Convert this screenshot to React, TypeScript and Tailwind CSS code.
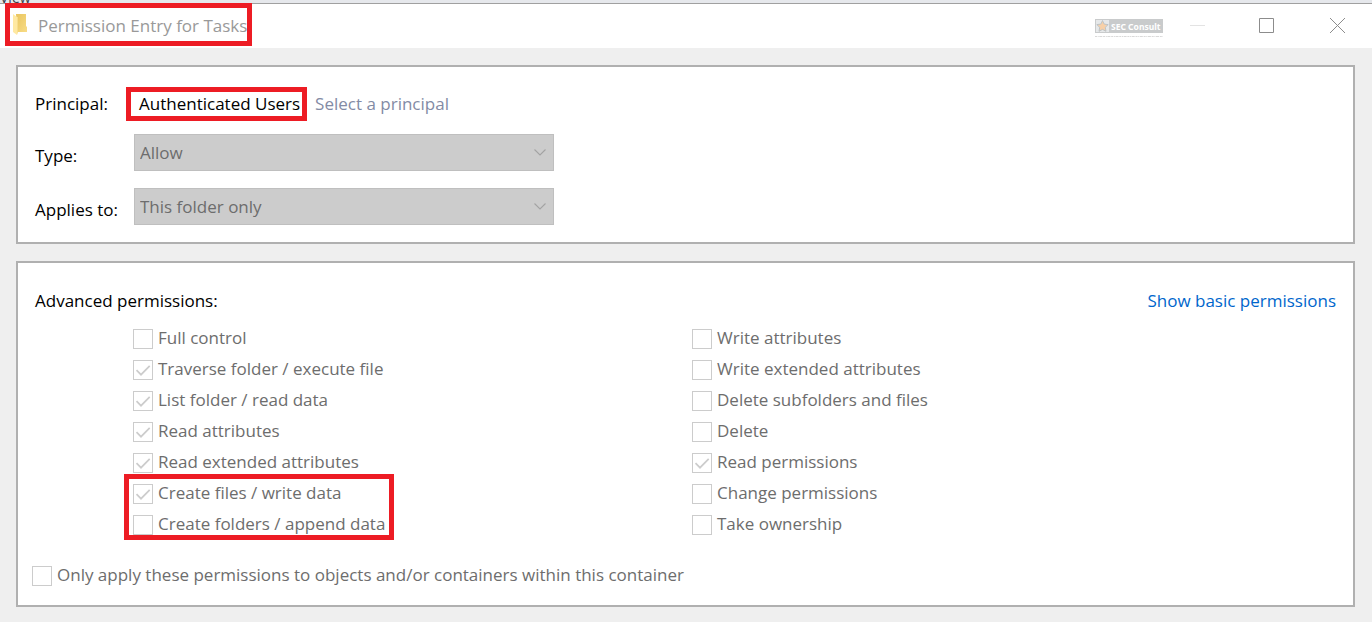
import React from "react";

type Permission = { label: string; checked?: boolean };

const leftTop: Permission[] = [
  { label: "Full control" },
  { label: "Traverse folder / execute file", checked: true },
  { label: "List folder / read data", checked: true },
  { label: "Read attributes", checked: true },
  { label: "Read extended attributes", checked: true },
];

const leftMarked: Permission[] = [
  { label: "Create files / write data", checked: true },
  { label: "Create folders / append data" },
];

const right: Permission[] = [
  { label: "Write attributes" },
  { label: "Write extended attributes" },
  { label: "Delete subfolders and files" },
  { label: "Delete" },
  { label: "Read permissions", checked: true },
  { label: "Change permissions" },
  { label: "Take ownership" },
];

function Check({ label, checked = false }: Permission) {
  return (
    <label className="flex h-[31px] items-center gap-[5px] whitespace-nowrap text-[#6d6d6d]">
      <span className="mt-[2px] grid size-5 shrink-0">
        <input
          type="checkbox"
          disabled
          defaultChecked={checked}
          className="col-start-1 row-start-1 size-5 appearance-none border border-[#cccccc] bg-white"
        />
        {checked && (
          <svg viewBox="0 0 20 20" className="col-start-1 row-start-1 size-5" aria-hidden="true">
            <path d="M3.5 10.2 8 14.7 16.7 5.8" fill="none" stroke="#cccccc" strokeWidth="1.7" />
          </svg>
        )}
      </span>
      {label}
    </label>
  );
}

function Select({ id, value }: { id: string; value: string }) {
  return (
    <div className="grid w-[420px]">
      <select
        id={id}
        disabled
        className="col-start-1 row-start-1 h-[37px] w-full appearance-none border border-[#bfbfbf] bg-[#cccccc] px-[5px] pt-px text-[#6d6d6d] opacity-100"
      >
        <option>{value}</option>
      </select>
      <svg
        viewBox="0 0 12 7"
        className="pointer-events-none col-start-1 row-start-1 mr-2 h-[7px] w-3 self-center justify-self-end"
        aria-hidden="true"
      >
        <path d="M.5.5 6 6 11.5.5" fill="none" stroke="#a3a3a3" strokeWidth="1.1" />
      </svg>
    </div>
  );
}

function FolderIcon() {
  return (
    <svg viewBox="0 0 14 21" className="h-[21px] w-[14px] shrink-0" aria-hidden="true">
      <defs>
        <linearGradient id="folder" x1="0" x2="1" y1="0" y2="1">
          <stop offset="0" stopColor="#e9c55f" />
          <stop offset="1" stopColor="#f8dc86" />
        </linearGradient>
      </defs>
      <path d="M3 0h10v12l1 1v5H4z" fill="url(#folder)" />
      <path d="M0 0 4 3v18l-4-3z" fill="#ffe9a2" />
      <path d="M4 3h1v15l-1 3z" fill="#f7dd8c" />
    </svg>
  );
}

function SecConsultLogo() {
  return (
    <svg viewBox="0 0 68 20" className="mt-[7px] h-5 w-[68px]" role="img" aria-label="SEC Consult">
      <path d="M0 0h68v14H0z" fill="#c9cbcc" />
      <path d="M1 1h13v12H1z" fill="#e6e8e9" />
      <path
        d="m7.5 1.5 1.7 3.6 4 .5-2.9 2.7.7 4-3.5-1.9L4 12.3l.7-4L1.8 5.600l4-.5z"
        fill="#f7d0a8"
        stroke="#b9c1c6"
        strokeWidth=".9"
      />
      <text x="16" y="10.5" fontFamily="Noto Sans, sans-serif" fontWeight="700" fontSize="8.5" fill="#fff">
        SEC Consult
      </text>
      <path d="M0 17.5h68" stroke="#d9d9d9" strokeDasharray="2 .7 1 .6 3 .8" />
    </svg>
  );
}

export default function App() {
  return (
    <div className="min-h-screen bg-[#efefef] pb-[15px] font-['Open_Sans','Noto_Sans',sans-serif] text-[17px] leading-6 text-black">
      <div className="flex h-1 items-end overflow-hidden border-b border-[#a0a0a0] bg-[#e6e8ec] text-sm leading-[10px] text-[#3c4048]">
        <span>View</span>
      </div>
      <header className="flex h-11 items-center justify-between bg-white pl-[5px]">
        <h1 className="-mt-px flex h-[43px] items-center gap-[11px] self-start border-[5px] border-[#ed1c24] pl-[3px] text-[#999999]">
          <FolderIcon />
          <span className="whitespace-nowrap pt-[3px]">Permission Entry for Tasks</span>
        </h1>
        <div className="flex items-center pb-[2px] pr-[26px]">
          <SecConsultLogo />
          <button type="button" aria-label="Minimize" className="ml-[26px]">
            <svg viewBox="0 0 17 17" className="size-[17px]">
              <path d="M1 8.5h15" stroke="#e3e3e3" />
            </svg>
          </button>
          <button type="button" aria-label="Maximize" className="ml-[52px]">
            <svg viewBox="0 0 17 17" className="size-[17px]">
              <path d="M1.5 1.5h14v14h-14z" fill="none" stroke="#8c8c8c" />
            </svg>
          </button>
          <button type="button" aria-label="Close" className="ml-[54px]">
            <svg viewBox="0 0 17 17" className="size-[17px]">
              <path d="m1 1 15 15M16 1 1 16" fill="none" stroke="#8c8c8c" />
            </svg>
          </button>
        </div>
      </header>

      <main className="mx-4 mt-[17px] flex flex-col gap-[17px] pr-px">
        <section className="border-2 border-[#b0b0b0] bg-white pb-[17px] pl-[17px] pt-5">
          <div className="flex h-[34px] items-center">
            <span className="w-[91px]">Principal:</span>
            <span className="flex h-[34px] items-center whitespace-nowrap border-[5px] border-[#ed1c24] pl-2 pr-[2px]">
              Authenticated Users
            </span>
            <a href="#principal" className="ml-2 text-[#838ba5]">
              Select a principal
            </a>
          </div>
          <div className="mt-[13px] flex items-center">
            <label htmlFor="type" className="w-[99px] pt-[6px]">
              Type:
            </label>
            <Select id="type" value="Allow" />
          </div>
          <div className="mt-[17px] flex items-center">
            <label htmlFor="applies" className="w-[99px] pt-[6px]">
              Applies to:
            </label>
            <Select id="applies" value="This folder only" />
          </div>
        </section>

        <section className="border-2 border-[#b0b0b0] bg-white pb-[15px] pl-[14px] pr-[17px] pt-[26px]">
          <div className="flex items-center justify-between pl-[3px]">
            <h2>Advanced permissions:</h2>
            <a href="#basic" className="text-[#0066cc]">
              Show basic permissions
            </a>
          </div>
          <div className="mt-[9px] flex pl-[92px]">
            <div className="flex w-[568px] flex-col items-start">
              <div className="pl-[9px]">
                {leftTop.map((p) => (
                  <Check key={p.label} {...p} />
                ))}
              </div>
              <div className="-mb-px -mt-[3px] h-[66px] border-[5px] border-[#ed1c24] px-1">
                <div className="-mt-[2px]">
                  {leftMarked.map((p) => (
                    <Check key={p.label} {...p} />
                  ))}
                </div>
              </div>
            </div>
            <div>
              {right.map((p) => (
                <Check key={p.label} {...p} />
              ))}
            </div>
          </div>
          <div className="mt-5 flex">
            <Check label="Only apply these permissions to objects and/or containers within this container" />
          </div>
        </section>
      </main>
    </div>
  );
}
